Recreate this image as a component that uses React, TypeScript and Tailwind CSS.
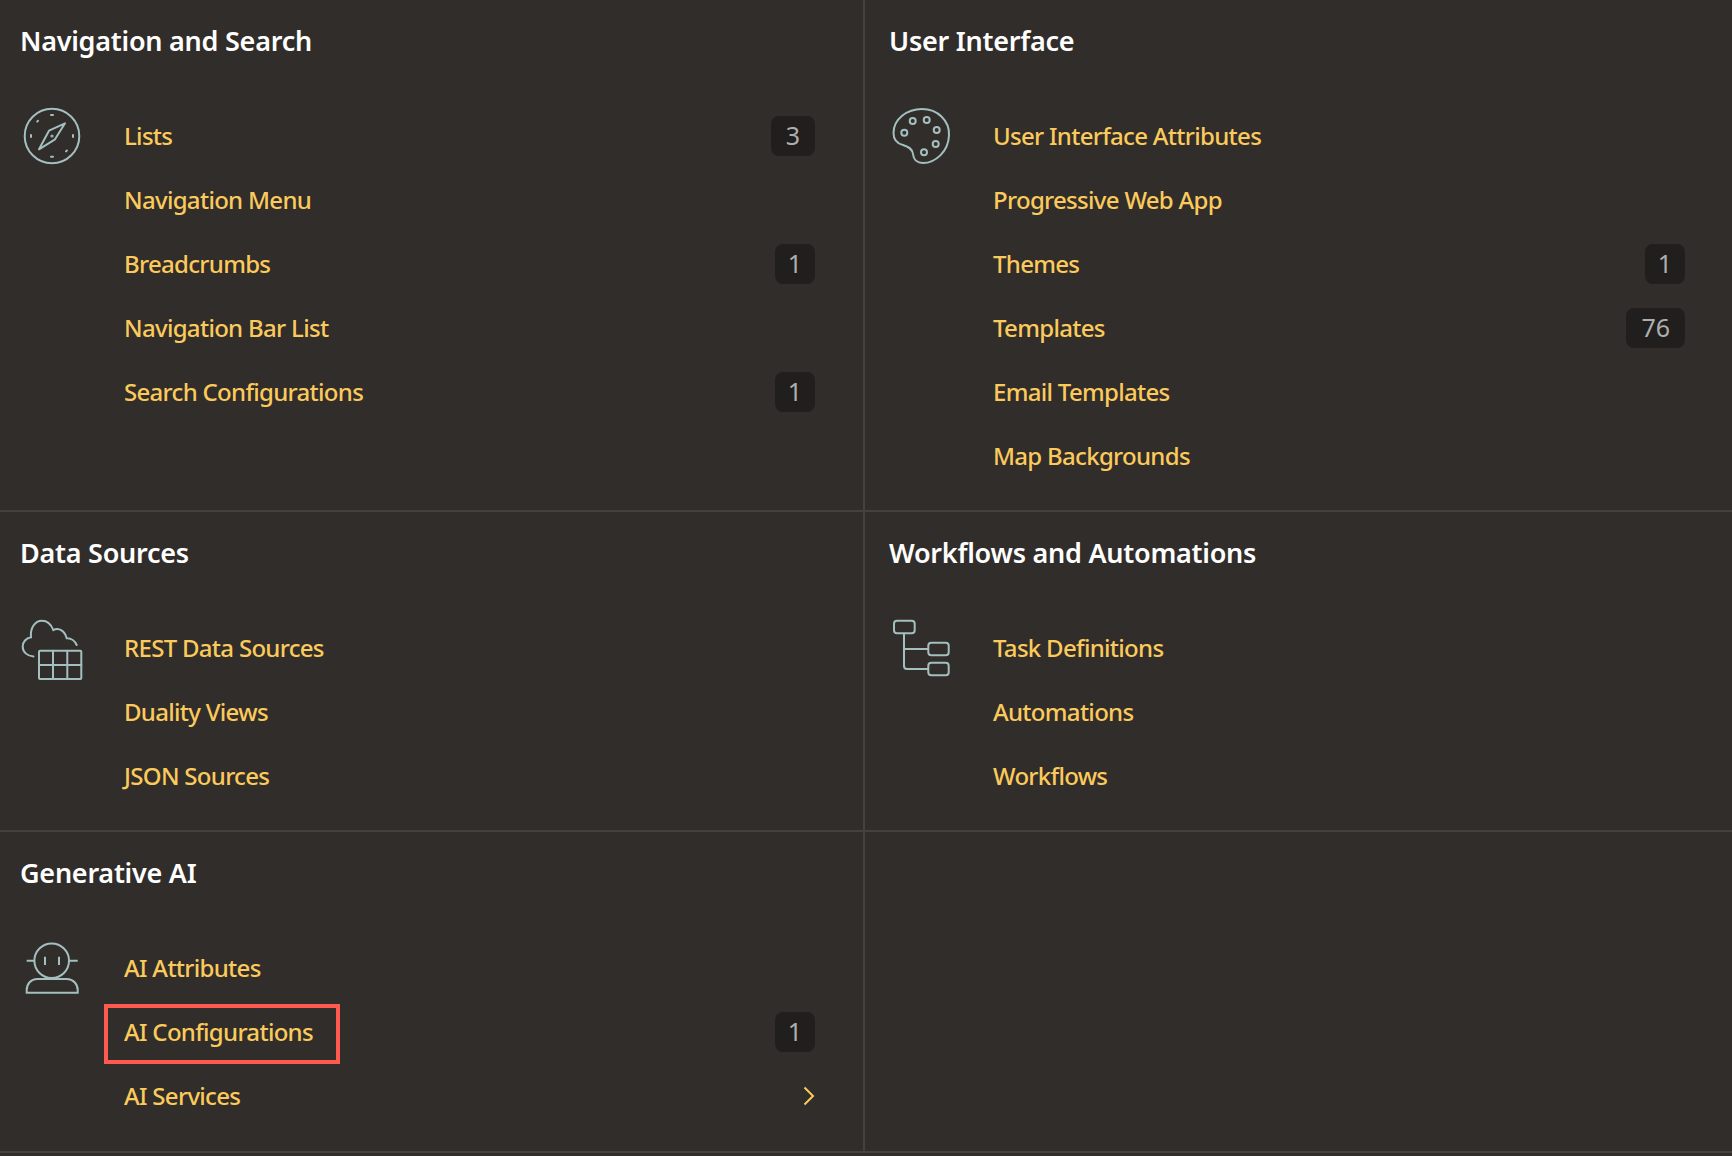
import type { ReactNode } from "react";

const Compass = () => (
  <svg viewBox="0 0 64 64" className="w-16 h-16 shrink-0 fill-none stroke-[#a3bfbf] stroke-2" strokeLinecap="round" strokeLinejoin="round">
    <circle cx="32" cy="32" r="27.3" />
    <path d="M31 11h2M31 52.7h2M11 31v2M53 31v2M17.2 17.6l0.8-0.8M46 47.4l0.9-0.9" />
    <path d="M45 19.3L35 35.3L19 45.3L29 26.7Z" />
    <circle cx="32" cy="32" r="0.6" />
  </svg>
);

const Palette = () => (
  <svg viewBox="0 0 64 64" className="w-16 h-16 shrink-0 fill-none stroke-[#a3bfbf] stroke-2">
    <path d="M4.5 29C4.5 15 18 5 33 5C49 5 60.5 17 60 31C59.5 48 46 59 34 59C27.5 59 24.5 55 24 50C23.5 45 20 43 14 41C8 39.5 4.5 36 4.5 29Z" />
    <circle cx="23.7" cy="17" r="3" />
    <circle cx="37.7" cy="16" r="3" />
    <circle cx="47.7" cy="26" r="3" />
    <circle cx="46.7" cy="40" r="3" />
    <circle cx="35" cy="48.3" r="3" />
    <circle cx="15.3" cy="28.7" r="3" />
  </svg>
);

const CloudTable = () => (
  <svg viewBox="0 0 64 64" className="w-16 h-16 shrink-0 fill-none stroke-[#a3bfbf] stroke-2" strokeLinecap="round">
    <path d="M13.5 40.5C7 40 2.7 36 2.7 30.5C2.7 26 6 22 11 21.3C10 12 15 4.7 22 4.7C27 4.7 31 8 33.3 14C39 11 45 15 46.7 22.3C51 22 55 25 56.7 29" />
    <rect x="19" y="34.7" width="42.3" height="28.3" rx="1" />
    <path d="M33 34.7V63M47.3 34.7V63M19 49H61.3" />
  </svg>
);

const TaskTree = () => (
  <svg viewBox="0 0 64 64" className="w-16 h-16 shrink-0 fill-none stroke-[#a3bfbf] stroke-2">
    <rect x="5" y="4.7" width="20.7" height="12.6" rx="3" />
    <rect x="39.3" y="26.7" width="20.4" height="12.6" rx="3" />
    <rect x="39.3" y="46.7" width="20.4" height="12.6" rx="3" />
    <path d="M15 17.3V50C15 52 16 53 18 53H39.3M15 33H39.3" />
  </svg>
);

const Bot = () => (
  <svg viewBox="0 0 64 64" className="w-16 h-16 shrink-0 fill-none stroke-[#a3bfbf] stroke-2">
    <circle cx="31.7" cy="24.7" r="17.3" />
    <path d="M6.7 24.7H14M49.3 24.7H57.7M25 20.7V29M39 20.7V29" />
    <path d="M6.7 56.7V54C6.7 48 11 43 17 43H47C53 43 57.7 48 57.7 54V56.7Z" />
  </svg>
);

interface Item {
  label: string;
  count?: string;
  chevron?: boolean;
  marked?: boolean;
}

const Row = ({ label, count, chevron, marked }: Item) => (
  <li className="h-16 flex items-center justify-between">
    <a href="#" className="block relative text-[#fbca5c] text-[24px] font-medium tracking-[-0.7px] leading-8">
      {label}
      {marked && <span className="absolute -left-5 -right-[27px] -top-3 -bottom-4 border-4 border-[#ff5a4f]" />}
    </a>
    {count && (
      <span className={`h-10 flex items-center justify-center rounded-lg bg-[#201f1d] text-[#aeaeae] text-[25px] ${count === "1" ? "w-10" : "px-[15px]"}`}>
        {count}
      </span>
    )}
    {chevron && (
      <svg viewBox="0 0 12 20" className="w-3 h-5 fill-none stroke-[#fbca5c] stroke-2">
        <path d="M1.5 1.5L10 10L1.5 18.5" />
      </svg>
    )}
  </li>
);

const Section = ({ title, icon, items, className }: { title: string; icon: ReactNode; items: Item[]; className: string }) => (
  <section className={className}>
    <h2 className="text-white font-semibold text-[27px] tracking-[-0.25px] leading-8 h-8">{title}</h2>
    <div className="flex gap-10 mt-[47px]">
      {icon}
      <ul className="flex-1">
        {items.map((item) => (
          <Row key={item.label} {...item} />
        ))}
      </ul>
    </div>
  </section>
);

const leftCell = "pl-5 pr-12 pt-[25px] border-r-2 border-b-2 border-[#45413e]";
const rightCell = "pl-6 pr-[47px] pt-[25px] border-b-2 border-[#45413e]";

export default function App() {
  return (
    <div className="w-[1732px] h-[1156px] overflow-hidden bg-[#312d2a] font-['Noto_Sans',sans-serif]">
      <div className="grid grid-cols-[865px_867px] grid-rows-[512px_320px_321px]">
        <Section
          className={leftCell}
          title="Navigation and Search"
          icon={<Compass />}
          items={[
            { label: "Lists", count: "3" },
            { label: "Navigation Menu" },
            { label: "Breadcrumbs", count: "1" },
            { label: "Navigation Bar List" },
            { label: "Search Configurations", count: "1" },
          ]}
        />
        <Section
          className={rightCell}
          title="User Interface"
          icon={<Palette />}
          items={[
            { label: "User Interface Attributes" },
            { label: "Progressive Web App" },
            { label: "Themes", count: "1" },
            { label: "Templates", count: "76" },
            { label: "Email Templates" },
            { label: "Map Backgrounds" },
          ]}
        />
        <Section
          className={leftCell}
          title="Data Sources"
          icon={<CloudTable />}
          items={[{ label: "REST Data Sources" }, { label: "Duality Views" }, { label: "JSON Sources" }]}
        />
        <Section
          className={rightCell}
          title="Workflows and Automations"
          icon={<TaskTree />}
          items={[{ label: "Task Definitions" }, { label: "Automations" }, { label: "Workflows" }]}
        />
        <Section
          className={leftCell}
          title="Generative AI"
          icon={<Bot />}
          items={[
            { label: "AI Attributes" },
            { label: "AI Configurations", count: "1", marked: true },
            { label: "AI Services", chevron: true },
          ]}
        />
        <div className="border-b-2 border-[#45413e]" />
      </div>
    </div>
  );
}
